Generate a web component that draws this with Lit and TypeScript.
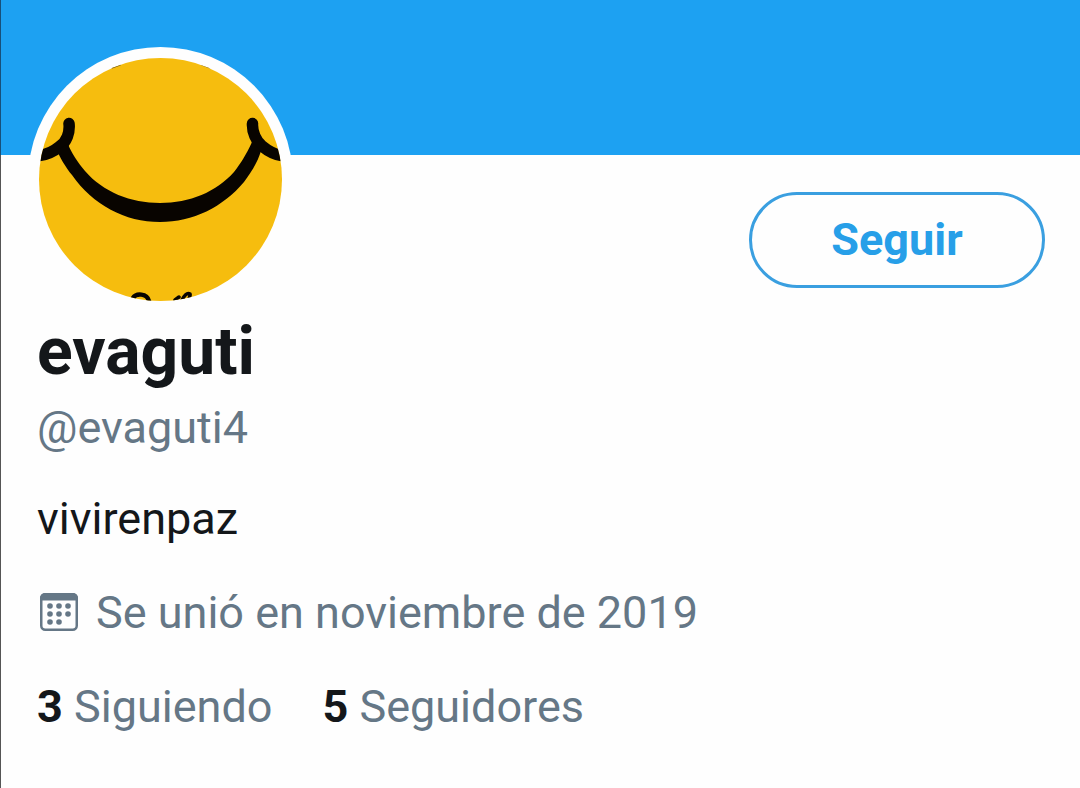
import { LitElement, html, css, svg } from "lit";
import { customElement, property } from "lit/decorators.js";

@customElement("smile-avatar")
class SmileAvatar extends LitElement {
  static styles = css`
    :host {
      display: block;
      flex: none;
      width: 243px;
      height: 243px;
      border-radius: 50%;
      box-shadow: 0 0 0 11px #fefefe;
      background: #f6bd0e;
      overflow: hidden;
    }
    svg {
      display: block;
      width: 100%;
      height: 100%;
    }
  `;

  render() {
    return html`
      <svg viewBox="0 0 243 243" role="img" aria-label="evaguti">
        <g fill="none" stroke="#080400" stroke-linecap="round">
          <path d="M30 65.500C31 74 28 84 20 89C14 94 8 97 -2 98" stroke-width="11.500" />
          <path d="M213.500 65.500C213 74 217 83 223 88C229 93 235 97 245 98" stroke-width="11.500" />
          <path d="M94 240C97 235 108 235 110 243" stroke-width="4.500" />
          <path d="M136 242l4-3M143 242c2-4 5-8 8-6c1 2-2 4-1 7" stroke-width="3.500" />
          <path d="M73 9.500l8-3M163 6.500l8 3" stroke="#6b5518" stroke-width="2" />
        </g>
        <path
          d="M18 92C20 98 27 110 33 117C54 147 86 164 121 164C154 164 184 149 205 124C211 116 218 106 222 93L213 84C207 97 202 105 195 114C177 134 151 145 121 145C92 145 64 134 46 113C39 105 32 94 29 86Z"
          fill="#080400"
        />
      </svg>
    `;
  }
}

const dots = [
  [10, 13], [19, 13], [28, 13],
  [10, 21], [19, 21], [28, 21],
  [10, 29], [19, 29],
];

@customElement("profile-stat")
class ProfileStat extends LitElement {
  @property({ type: Number }) count = 0;
  @property() label = "";

  static styles = css`
    :host {
      display: block;
    }
    .link {
      color: #657786;
      text-decoration: none;
    }
    .count {
      color: #14171a;
      font-weight: 700;
    }
  `;

  render() {
    return html`<a class="link" href="#"><span class="count">${this.count}</span> ${this.label}</a>`;
  }
}

@customElement("app-root")
class AppRoot extends LitElement {
  static styles = css`
    :host {
      display: block;
      box-sizing: border-box;
      min-height: 100vh;
      background: linear-gradient(#555, #555) left / 1px 100% no-repeat #fefefe;
      color: #14171a;
      font-family: Roboto, "Liberation Sans", sans-serif;
      font-size: 45px;
      line-height: 54px;
    }
    .banner {
      height: 155px;
      background: #1da1f2;
      border-left: 1px solid #17507a;
      box-sizing: border-box;
    }
    .profile {
      padding: 0 35px 48px 37px;
    }
    .top {
      display: flex;
      justify-content: space-between;
      align-items: flex-start;
      padding-left: 2px;
    }
    .avatar {
      margin-top: -97px;
    }
    .follow {
      margin: 37px 0 0;
      box-sizing: border-box;
      width: 296px;
      height: 96px;
      border: 3px solid #3a9fe0;
      border-radius: 48px;
      background: transparent;
      color: #279fe8;
      font: inherit;
      font-weight: 700;
      cursor: pointer;
    }
    .name {
      margin: 12px 0 0;
      font-size: 66px;
      line-height: 78px;
      font-weight: 700;
    }
    .handle {
      margin: 10px 0 0;
      color: #657786;
    }
    .bio {
      margin: 37px 0 0;
    }
    .joined {
      display: flex;
      align-items: center;
      gap: 18px;
      margin: 40px 0 0;
      padding-left: 3px;
      color: #657786;
    }
    .calendar {
      flex: none;
      width: 38px;
      height: 38px;
      margin-bottom: 2px;
    }
    .stats {
      display: flex;
      gap: 50px;
      margin-top: 40px;
    }
  `;

  render() {
    return html`
      <header class="banner"></header>
      <main class="profile">
        <div class="top">
          <smile-avatar class="avatar"></smile-avatar>
          <button class="follow" type="button">Seguir</button>
        </div>
        <h1 class="name">evaguti</h1>
        <p class="handle">@evaguti4</p>
        <p class="bio">vivirenpaz</p>
        <p class="joined">
          <svg class="calendar" viewBox="0 0 38 38" aria-hidden="true">
            <rect x="1.25" y="1.25" width="35.5" height="35.5" rx="4" fill="none" stroke="#657786" stroke-width="2.5" />
            <path d="M0 7.500V5a5 5 0 0 1 5-5h28a5 5 0 0 1 5 5v2.500z" fill="#657786" />
            ${dots.map(([x, y]) => svg`<circle cx=${x} cy=${y} r="2.8" fill="#657786" />`)}
          </svg>
          <span>Se unió en noviembre de 2019</span>
        </p>
        <div class="stats">
          <profile-stat .count=${3} label="Siguiendo"></profile-stat>
          <profile-stat .count=${5} label="Seguidores"></profile-stat>
        </div>
      </main>
    `;
  }
}
